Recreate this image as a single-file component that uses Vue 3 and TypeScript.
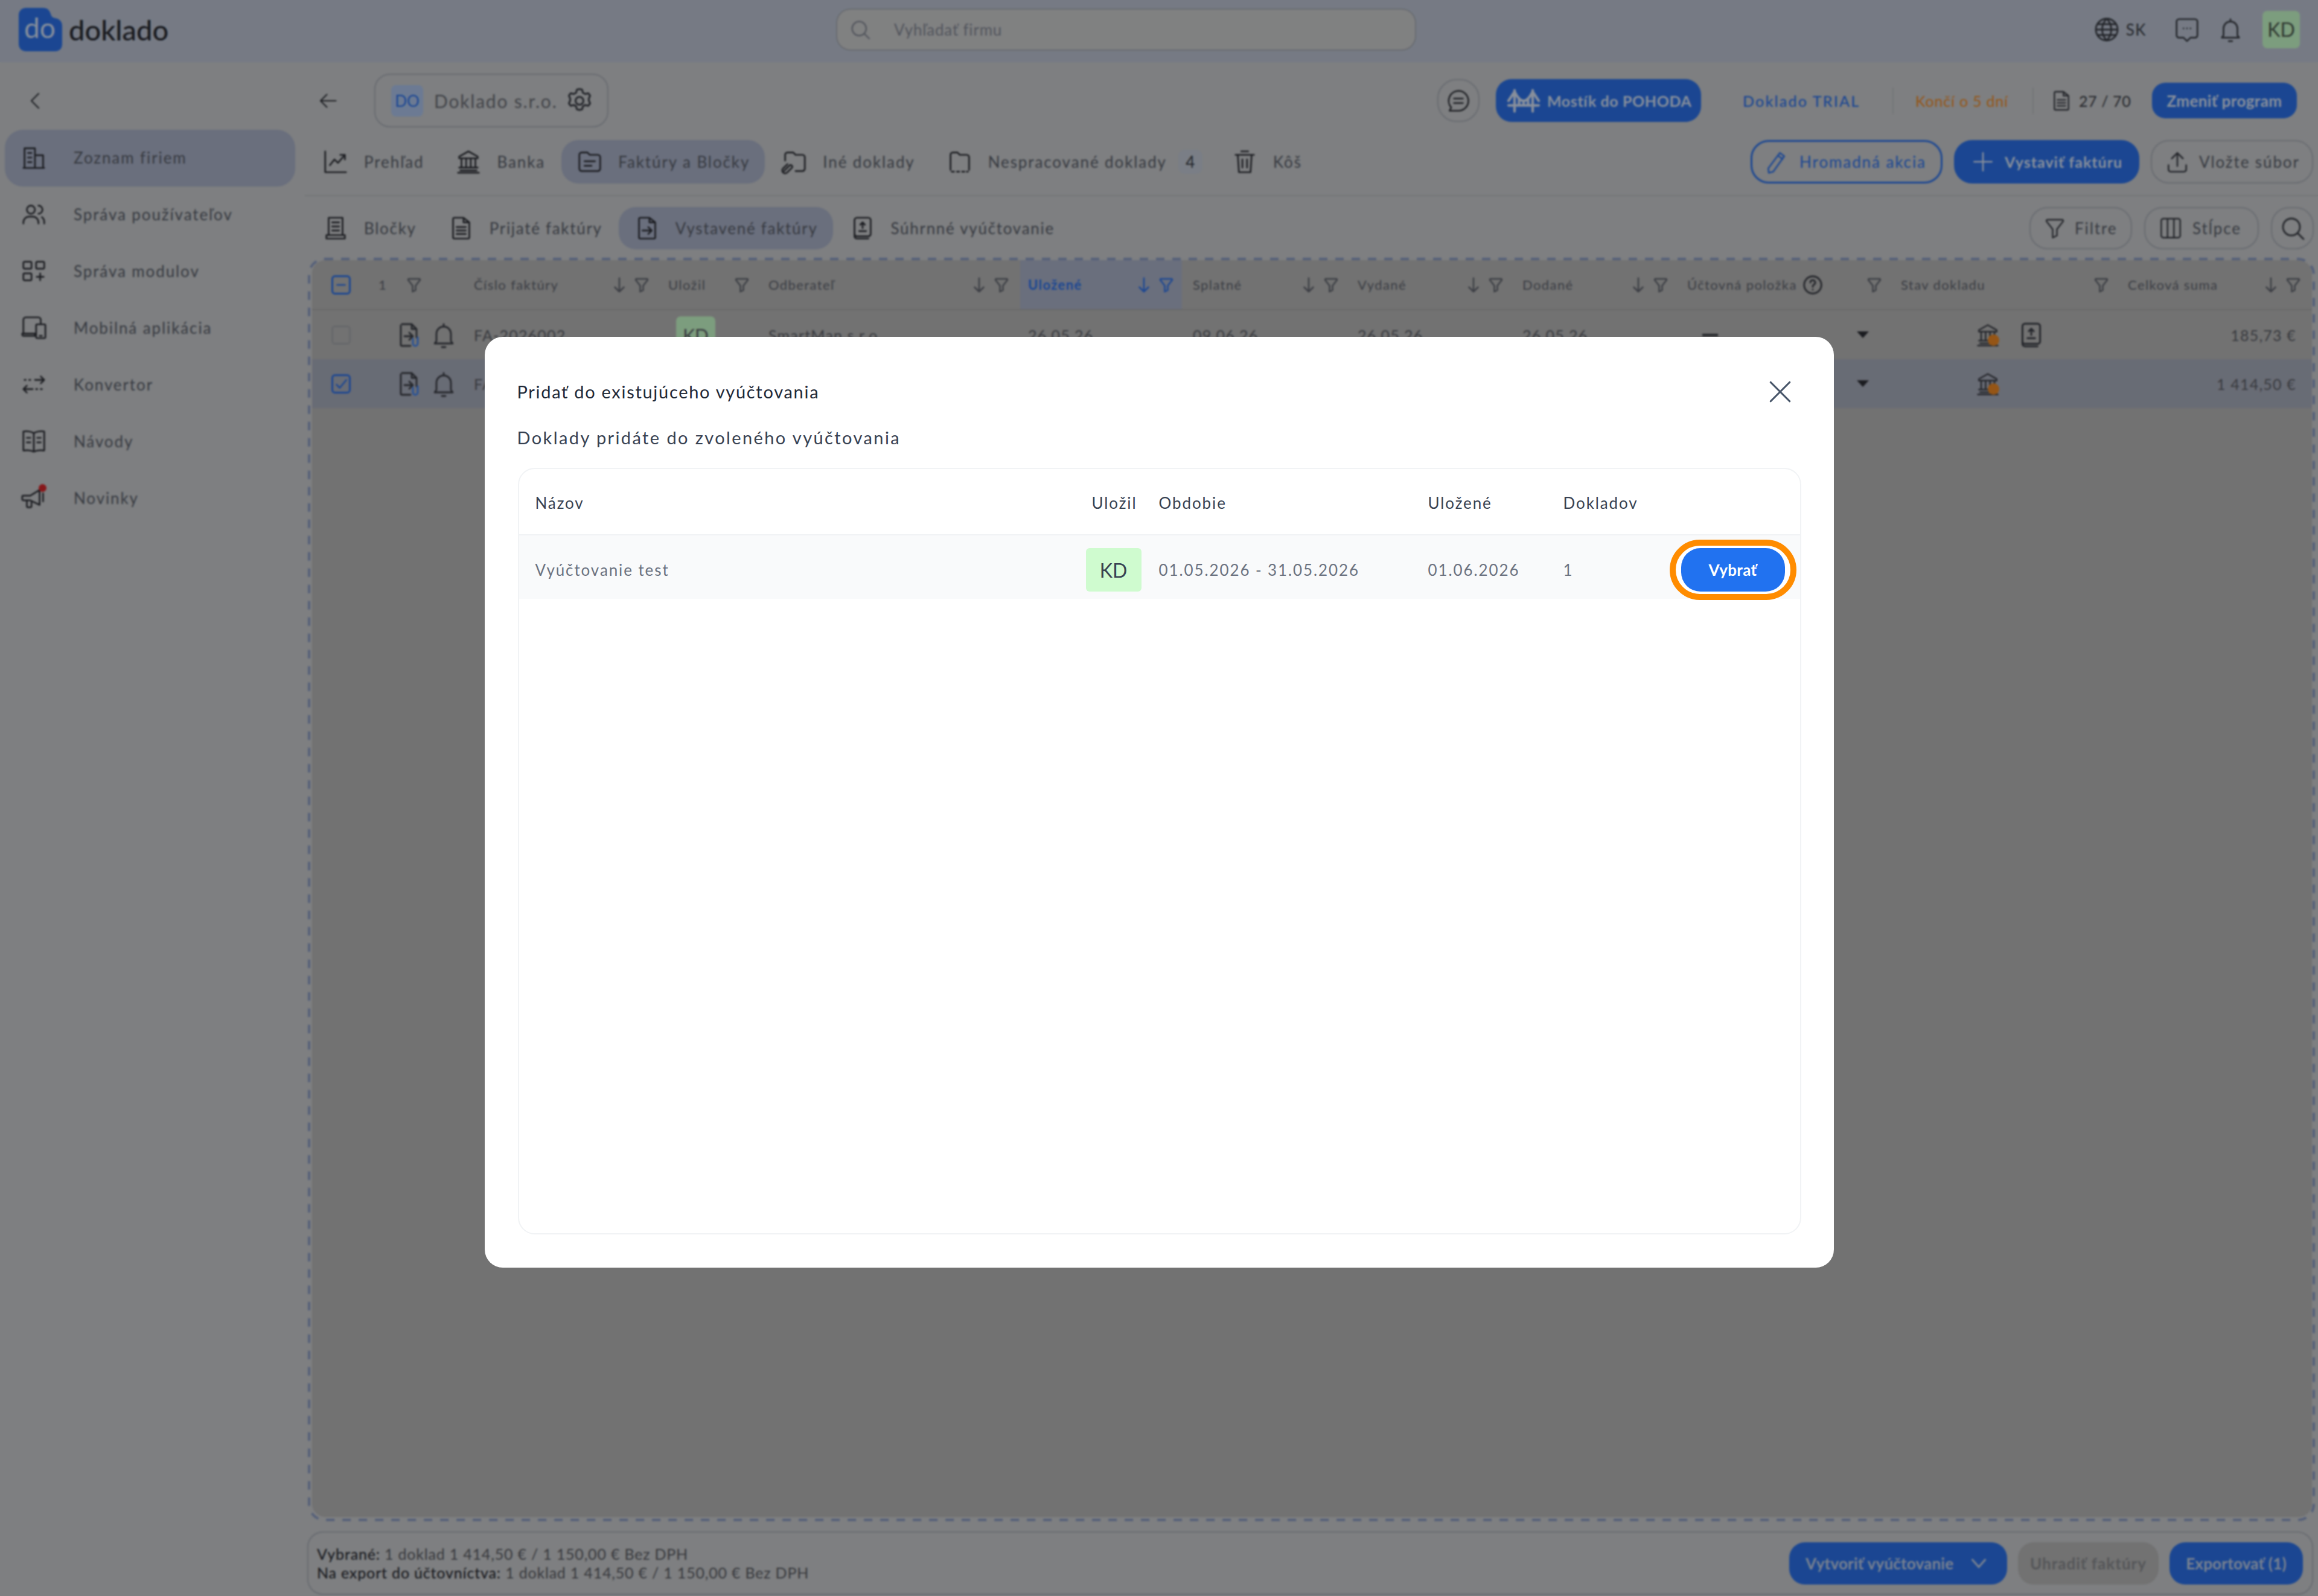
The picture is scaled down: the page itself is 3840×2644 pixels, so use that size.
<script setup lang="ts">
import { h } from "vue";

const icons: Record<string, { d: string; accent?: string }> = {
    back: { d: "M16 4l-8 8 8 8" },
    arrowLeft: { d: "M21 12H4M11 5l-7 7 7 7" },
    building: { d: "M3 21h18M4 21V4h9v17M13 10h7v11M7 8h3M7 12h3M7 16h3" },
    users: { d: "M3 20v-1a5 5 0 0 1 5-5h3a5 5 0 0 1 5 5v1M6 8a3.5 3.5 0 1 0 7 0a3.5 3.5 0 1 0-7 0M16 4.5a3.5 3.5 0 0 1 0 7M19 14.5a5 5 0 0 1 2 4v1.5" },
    modules: { d: "M4 4h5a1 1 0 0 1 1 1v4a1 1 0 0 1-1 1H4a1 1 0 0 1-1-1V5a1 1 0 0 1 1-1zM15 4h5a1 1 0 0 1 1 1v4a1 1 0 0 1-1 1h-5a1 1 0 0 1-1-1V5a1 1 0 0 1 1-1zM4 14h5a1 1 0 0 1 1 1v4a1 1 0 0 1-1 1H4a1 1 0 0 1-1-1v-4a1 1 0 0 1 1-1zM17.5 14v6M14.5 17h6" },
    device: { d: "M3 16V5a2 2 0 0 1 2-2h11a2 2 0 0 1 2 2v4M2 17h11v2H3a1 1 0 0 1-1-1zM15 9h6a1 1 0 0 1 1 1v10a1 1 0 0 1-1 1h-6a1 1 0 0 1-1-1V10a1 1 0 0 1 1-1zM17 19h2" },
    convert: { d: "M13 8h8M18 5l3 3-3 3M3 16h8M6 13l-3 3 3 3M4 8h1M8 8h1M14 16h1M18 16h1" },
    book: { d: "M12 5v16M12 5c-2-1.5-6-2-9-1.5V20c3-.5 7 0 9 1 2-1 6-1.5 9-1V3.5c-3-.5-7 0-9 1.5zM6 9h3M6 13h3M15 9h3M15 13h3" },
    megaphone: { d: "M3 10h6l8-5v13l-8-4H3a1 1 0 0 1-1-1v-2a1 1 0 0 1 1-1zM6 14v5a1 1 0 0 0 1 1h2a1 1 0 0 0 1-1v-4M20 8v7" },
    gear: { d: "M12 3l2 .5.6 2.3 1.8 1 2.3-.6 1.4 1.8-1 2.3v1.4l1 2.3-1.4 1.8-2.3-.6-1.8 1-.6 2.3-2 .5-2-.5-.6-2.3-1.8-1-2.3.6-1.4-1.8 1-2.3v-1.4l-1-2.3 1.4-1.8 2.3.6 1.8-1L10 3.5zM9 12a3 3 0 1 0 6 0a3 3 0 1 0-6 0" },
    bubble: { d: "M12 3a9 9 0 0 1 0 18H4l1.5-3A9 9 0 0 1 12 3zM8 10h8M8 14h8" },
    chart: { d: "M3 3v18h18M7 15l4-5 3 3 6-7M16 6h4v4" },
    bank: { d: "M12 3l8 4.5V9H4V7.5zM6 9v8M10 9v8M14 9v8M18 9v8M4 17h16M5 19.5h14M3 21.5h18" },
    folderDoc: { d: "M3 6a2 2 0 0 1 2-2h5l2 2h7a2 2 0 0 1 2 2v10a2 2 0 0 1-2 2H5a2 2 0 0 1-2-2zM7.5 11.5h9M7.5 15.5h6" },
    folderClip: { d: "M4 11V6a2 2 0 0 1 2-2h5l2 2h6a2 2 0 0 1 2 2v10a2 2 0 0 1-2 2h-6M3 20l5-5a1.5 1.5 0 0 1 2 2l-4 4a2.5 2.5 0 0 1-4-3l4-4" },
    folderDash: { d: "M4 19V6a2 2 0 0 1 2-2h4l2 2h6a2 2 0 0 1 2 2v11M5 20.5h2M9.5 20.5h2M14 20.5h2M18 20.5h1" },
    trash: { d: "M4 6h16M9 3h6M6 6l1 15h10l1-15M10 10v7M14 10v7" },
    receipt: { d: "M6 3h12v15H6zM4 18h16v3H4zM9 7h6M9 10.5h6M9 14h6" },
    invoice: { d: "M6 3h8l5 4v13a1 1 0 0 1-1 1H6a1 1 0 0 1-1-1V4a1 1 0 0 1 1-1zM14 3v4h5M8 11h8M8 14h8M8 17h8" },
    docArrow: { d: "M6 3h8l5 4v13a1 1 0 0 1-1 1H6a1 1 0 0 1-1-1V4a1 1 0 0 1 1-1zM14 3v4h5M8 14h8M13 11l3 3-3 3" },
    docClip: { d: "M6 3h8l4 4v7M14 3v4h4M5 4v16a1 1 0 0 0 1 1h7M8 13h7M12 10l3 3-3 3", accent: "M19 14v5a2 2 0 0 1-4 0v-4" },
    stack: { d: "M7 3h10a2 2 0 0 1 2 2v12a2 2 0 0 1-2 2H7a2 2 0 0 1-2-2V5a2 2 0 0 1 2-2zM5 17v2a2 2 0 0 0 2 2h10M12 7v5M10 9l2-2 2 2M9 14.5h6" },
    pencil: { d: "M15 4l4 3L9 21l-4 1-.5-4zM13.5 6.5l4 3" },
    plus: { d: "M12 4v16M4 12h16" },
    upload: { d: "M12 16V4M7 9l5-5 5 5M4 15v4a2 2 0 0 0 2 2h12a2 2 0 0 0 2-2v-4" },
    filter: { d: "M5 4h14a1 1 0 0 1 .8 1.6L14 13v6l-4 2v-8L4.2 5.6A1 1 0 0 1 5 4z" },
    columns: { d: "M5 3h14a2 2 0 0 1 2 2v14a2 2 0 0 1-2 2H5a2 2 0 0 1-2-2V5a2 2 0 0 1 2-2zM9 3v18M15 3v18" },
    search: { d: "M4 11a7 7 0 1 0 14 0a7 7 0 1 0-14 0M16 16l5 5" },
    globe: { d: "M3 12a9 9 0 1 0 18 0a9 9 0 1 0-18 0M3 12h18M4.5 7.5h15M4.5 16.5h15M12 3c-5 5-5 13 0 18M12 3c5 5 5 13 0 18" },
    chatDots: { d: "M5 3h14a2 2 0 0 1 2 2v12a2 2 0 0 1-2 2h-4l-3 3-3-3H5a2 2 0 0 1-2-2V5a2 2 0 0 1 2-2zM9 11h.01M12 11h.01M15 11h.01" },
    bell: { d: "M6 17V11a6 6 0 0 1 12 0v6l1.5 2h-15zM12 3v2M10.5 22h3" },
    arrowDown: { d: "M12 3v18M6 15l6 6 6-6" },
    help: { d: "M3 12a9 9 0 1 0 18 0a9 9 0 1 0-18 0M9.5 9.5a2.5 2.5 0 1 1 3.5 2.3c-.7.4-1 1-1 2.2M12 17h.01" },
    close: { d: "M5 5l14 14M19 5L5 19" },
    chevronDown: { d: "M5 8l7 8 7-8" },
    minus: { d: "M6 12h12" },
    check: { d: "M5 13l5 5 10-12" },
    bridge: { d: "M2 15h20M6 5v14M18 5v14M6 6c2 4 4 6 6 6s4-2 6-6M2 12l4-6M22 12l-4-6M9 11v4M12 12v3M15 11v4" },
};

// jednoduchá ikonka podľa názvu
const Icon = (p: { name: string }) => {
    const def = icons[p.name];
    return h(
        "svg",
        { viewBox: "0 0 24 24", fill: "none", stroke: "currentColor", "stroke-width": 1.4, "stroke-linecap": "round", "stroke-linejoin": "round", class: "ic" },
        [h("path", { d: def.d }), def.accent ? h("path", { d: def.accent, stroke: "#3b82f6" }) : null],
    );
};

const sideItems = [
    { label: "Zoznam firiem", icon: "building", active: true },
    { label: "Správa používateľov", icon: "users" },
    { label: "Správa modulov", icon: "modules" },
    { label: "Mobilná aplikácia", icon: "device" },
    { label: "Konvertor", icon: "convert" },
    { label: "Návody", icon: "book" },
    { label: "Novinky", icon: "megaphone", dot: true },
];

const navTabs = [
    { label: "Prehľad", icon: "chart" },
    { label: "Banka", icon: "bank" },
    { label: "Faktúry a Bločky", icon: "folderDoc", active: true },
    { label: "Iné doklady", icon: "folderClip" },
    { label: "Nespracované doklady", icon: "folderDash", badge: "4" },
    { label: "Kôš", icon: "trash" },
];

const subTabs = [
    { label: "Bločky", icon: "receipt" },
    { label: "Prijaté faktúry", icon: "invoice" },
    { label: "Vystavené faktúry", icon: "docArrow", active: true },
    { label: "Súhrnné vyúčtovanie", icon: "stack" },
];

const columns = [
    { label: "Číslo faktúry", sort: true, filter: true },
    { label: "Uložil", filter: true },
    { label: "Odberateľ", sort: true, filter: true },
    { label: "Uložené", sort: true, filter: true, active: true },
    { label: "Splatné", sort: true, filter: true },
    { label: "Vydané", sort: true, filter: true },
    { label: "Dodané", sort: true, filter: true },
    { label: "Účtovná položka", help: true, filter: true },
    { label: "Stav dokladu", filter: true },
    { label: "Celková suma", sort: true, filter: true },
];

const rows = [
    { no: "FA-2026002", buyer: "SmartMan s.r.o.", saved: "26.05.26", due: "09.06.26", issued: "26.05.26", delivered: "26.05.26", sum: "185,73 €", selected: false, stack: true, dash: true },
    { no: "FA-2026001", buyer: "SmartMan s.r.o.", saved: "26.05.26", due: "09.06.26", issued: "26.05.26", delivered: "26.05.26", sum: "1 414,50 €", selected: true, stack: false, dash: false },
];
</script>

<template>
    <div class="app">
        <header class="topbar">
            <div class="brand">
                <svg class="logo" viewBox="0 0 72 72">
                    <path d="M12 0h28c8 0 11 4 13 10 1 4 3 6 7 7 7 1 12 5 12 13v30c0 8-5 12-12 12H12C5 72 0 67 0 60V12C0 5 5 0 12 0z" fill="#2c72ec" />
                    <text x="35" y="50" text-anchor="middle" class="logo-text">do</text>
                </svg>
                <span class="brand-name">doklado</span>
            </div>
            <div class="search">
                <Icon name="search" />
                <span>Vyhľadať firmu</span>
            </div>
            <div class="top-right">
                <Icon name="globe" class="globe-ic" />
                <span class="lang">SK</span>
                <Icon name="chatDots" class="chat-ic" />
                <Icon name="bell" class="bell-ic" />
                <span class="user-badge">KD</span>
            </div>
        </header>

        <div class="body">
            <aside class="sidebar">
                <div class="collapse"><Icon name="back" /></div>
                <div v-for="item in sideItems" :key="item.label" class="side-item" :class="{ active: item.active }">
                    <span class="side-icon">
                        <Icon :name="item.icon" />
                        <i v-if="item.dot" class="red-dot"></i>
                    </span>
                    <span>{{ item.label }}</span>
                </div>
            </aside>

            <main class="main">
                <div class="toolbar">
                    <Icon name="arrowLeft" class="back-ic" />
                    <div class="company">
                        <span class="company-badge">DO</span>
                        <span class="company-name">Doklado s.r.o.</span>
                        <Icon name="gear" />
                    </div>
                    <div class="toolbar-right">
                        <button class="round-btn"><Icon name="bubble" /></button>
                        <button class="bridge-btn"><Icon name="bridge" />Mostík do POHODA</button>
                        <div class="plan">
                            <span class="plan-name">Doklado TRIAL</span>
                            <i class="sep"></i>
                            <span class="plan-end">Končí o 5 dní</span>
                            <i class="sep"></i>
                            <Icon name="invoice" class="plan-ic" />
                            <span class="plan-count">27 / 70</span>
                        </div>
                        <button class="change-btn">Zmeniť program</button>
                    </div>
                </div>

                <div class="nav-row">
                    <div class="tabs">
                        <div v-for="tab in navTabs" :key="tab.label" class="tab" :class="{ active: tab.active }">
                            <Icon :name="tab.icon" />
                            <span>{{ tab.label }}</span>
                            <em v-if="tab.badge" class="count">{{ tab.badge }}</em>
                        </div>
                    </div>
                    <div class="actions">
                        <button class="btn outline-blue"><Icon name="pencil" />Hromadná akcia</button>
                        <button class="btn solid"><Icon name="plus" />Vystaviť faktúru</button>
                        <button class="btn outline upload-btn"><Icon name="upload" />Vložte súbor</button>
                    </div>
                </div>

                <div class="sub-row">
                    <div class="tabs">
                        <div v-for="tab in subTabs" :key="tab.label" class="tab sub" :class="{ active: tab.active }">
                            <Icon :name="tab.icon" />
                            <span>{{ tab.label }}</span>
                        </div>
                    </div>
                    <div class="actions tight">
                        <button class="btn outline filter-btn"><Icon name="filter" />Filtre</button>
                        <button class="btn outline columns-btn"><Icon name="columns" />Stĺpce</button>
                        <button class="btn outline icon-only"><Icon name="search" /></button>
                    </div>
                </div>

                <div class="dropzone">
                    <svg class="dash-frame"><rect x="2" y="2" rx="26" ry="26" /></svg>
                    <div class="grid-table">
                        <div class="grid-row head">
                            <div class="cell sel">
                                <span class="box blue"><Icon name="minus" /></span>
                                <span class="sel-count">1</span>
                                <Icon name="filter" class="th-ic" />
                            </div>
                            <div v-for="col in columns" :key="col.label" class="cell th" :class="{ active: col.active }">
                                <span class="th-label">{{ col.label }}</span>
                                <Icon v-if="col.help" name="help" class="help-ic" />
                                <span class="spacer"></span>
                                <Icon v-if="col.sort" name="arrowDown" class="th-ic" />
                                <Icon v-if="col.filter" name="filter" class="th-ic" />
                            </div>
                        </div>
                        <div v-for="row in rows" :key="row.no" class="grid-row body-row" :class="{ selected: row.selected }">
                            <div class="cell sel">
                                <span class="box" :class="{ blue: row.selected }"><Icon v-if="row.selected" name="check" /></span>
                                <Icon name="docClip" class="row-doc" />
                                <Icon name="bell" class="row-bell" />
                            </div>
                            <div class="cell td">{{ row.no }}</div>
                            <div class="cell td"><span class="kd">KD</span></div>
                            <div class="cell td">{{ row.buyer }}</div>
                            <div class="cell td">{{ row.saved }}</div>
                            <div class="cell td">{{ row.due }}</div>
                            <div class="cell td">{{ row.issued }}</div>
                            <div class="cell td">{{ row.delivered }}</div>
                            <div class="cell td account">
                                <span class="dash" :class="{ hidden: !row.dash }"></span>
                                <i class="caret"></i>
                            </div>
                            <div class="cell td state">
                                <span class="bank"><Icon name="bank" /><i class="orange-dot"></i></span>
                                <Icon v-if="row.stack" name="stack" class="state-doc" />
                            </div>
                            <div class="cell td sum">{{ row.sum }}</div>
                        </div>
                    </div>
                </div>

                <footer class="summary">
                    <div class="summary-text">
                        <div><b>Vybrané:</b> 1 doklad 1 414,50 € / 1 150,00 € Bez DPH</div>
                        <div><b>Na export do účtovníctva:</b> 1 doklad 1 414,50 € / 1 150,00 € Bez DPH</div>
                    </div>
                    <div class="summary-actions">
                        <button class="foot-btn wide">Vytvoriť vyúčtovanie <Icon name="chevronDown" /></button>
                        <button class="foot-btn off">Uhradiť faktúry</button>
                        <button class="foot-btn export">Exportovať (1)</button>
                    </div>
                </footer>
            </main>
        </div>

        <div class="overlay">
            <section class="modal">
                <div class="modal-head">
                    <h2>Pridať do existujúceho vyúčtovania</h2>
                    <Icon name="close" class="close-ic" />
                </div>
                <p class="modal-sub">Doklady pridáte do zvoleného vyúčtovania</p>
                <div class="list">
                    <div class="list-row list-head">
                        <span class="first">Názov</span>
                        <span class="saved-by">Uložil</span>
                        <span>Obdobie</span>
                        <span>Uložené</span>
                        <span>Dokladov</span>
                        <span></span>
                    </div>
                    <div class="list-row list-item">
                        <span class="first">Vyúčtovanie test</span>
                        <span class="list-kd">KD</span>
                        <span>01.05.2026 - 31.05.2026</span>
                        <span>01.06.2026</span>
                        <span>1</span>
                        <span class="ring"><button class="pick">Vybrať</button></span>
                    </div>
                </div>
            </section>
        </div>
    </div>
</template>

<style>
html,
body {
    margin: 0;
    background: #cbcdd0;
}
</style>

<style scoped>
.app {
    position: relative;
    width: 3840px;
    height: 2644px;
    overflow: hidden;
    display: flex;
    flex-direction: column;
    background: #cbcdd0;
    color: #595e69;
    font-family: "Lato", "Noto Sans", sans-serif;
    font-size: 26px;
    letter-spacing: 1.9px;
}

button {
    font-family: inherit;
    letter-spacing: inherit;
    cursor: pointer;
}

.ic {
    width: 46px;
    height: 46px;
    flex: none;
}

.topbar {
    flex: none;
    height: 103px;
    display: flex;
    align-items: center;
    padding: 0 30px 6px 31px;
    background: #bec6d6;
    box-sizing: border-box;
}

.brand {
    width: 1354px;
    display: flex;
    align-items: center;
    gap: 11px;
}

.logo {
    width: 72px;
    height: 72px;
}

.logo-text {
    font-size: 46px;
    font-weight: 400;
    letter-spacing: 0;
    fill: #d6e4fb;
}

.brand-name {
    font-size: 47px;
    font-weight: 500;
    letter-spacing: 0;
    color: #2a2c33;
}

.search {
    width: 961px;
    height: 70px;
    box-sizing: border-box;
    display: flex;
    align-items: center;
    gap: 36px;
    padding-left: 18px;
    border: 2px solid #a9adb6;
    border-radius: 24px;
    background: #cfd0d1;
    color: #858a96;
    letter-spacing: 0.8px;
}

.search .ic {
    width: 40px;
    height: 40px;
}

.top-right {
    margin-left: auto;
    display: flex;
    align-items: center;
    color: #3a3d45;
}

.globe-ic {
    width: 48px;
    height: 48px;
}

.lang {
    margin: 0 44px 0 8px;
    letter-spacing: 1.4px;
}

.chat-ic {
    margin-right: 26px;
}

.bell-ic {
    margin-right: 30px;
}

.user-badge {
    width: 62px;
    height: 62px;
    display: grid;
    place-items: center;
    border-radius: 8px;
    background: #c9fdcb;
    color: #4b5a4f;
    font-size: 32px;
    letter-spacing: 0;
}

.body {
    flex: 1;
    min-height: 0;
    display: flex;
}

.sidebar {
    width: 505px;
    flex: none;
    padding-left: 8px;
    box-sizing: border-box;
}

.collapse {
    height: 112px;
    display: flex;
    align-items: center;
    padding-left: 32px;
    padding-top: 16px;
    box-sizing: border-box;
    color: #2c2e35;
}

.collapse .ic {
    width: 36px;
    height: 36px;
}

.side-item {
    width: 481px;
    height: 94px;
    display: flex;
    align-items: center;
    gap: 43px;
    padding: 0 0 3px 25px;
    box-sizing: border-box;
    border-radius: 30px;
}

.side-item.active {
    background: #abb3ca;
}

.side-icon {
    position: relative;
    display: flex;
    color: #2c2e35;
}

.red-dot {
    position: absolute;
    top: 0;
    right: 2px;
    width: 13px;
    height: 13px;
    border-radius: 50%;
    background: #d9262b;
}

.main {
    flex: 1;
    min-width: 0;
    display: flex;
    flex-direction: column;
    padding-top: 19px;
}

.toolbar {
    height: 89px;
    display: flex;
    align-items: center;
    padding-right: 35px;
}

.back-ic {
    width: 36px;
    height: 36px;
    margin-left: 20px;
    margin-right: 59px;
    color: #2c2e35;
}

.company {
    width: 388px;
    height: 89px;
    box-sizing: border-box;
    display: flex;
    align-items: center;
    padding: 0 20px 0 26px;
    border: 2px solid #a9adb6;
    border-radius: 26px;
    color: #6b6e76;
}

.company .ic {
    width: 52px;
    height: 52px;
    color: #3a3d45;
}

.company-badge {
    width: 53px;
    height: 52px;
    display: grid;
    place-items: center;
    border-radius: 8px;
    background: #aec6ee;
    color: #2c72ec;
    font-size: 26px;
    letter-spacing: 0;
}

.company-name {
    flex: 1;
    margin-left: 18px;
    font-size: 30px;
    letter-spacing: 1.8px;
    white-space: nowrap;
}

.toolbar-right {
    margin-left: auto;
    display: flex;
    align-items: center;
}

.round-btn {
    width: 70px;
    height: 71px;
    display: grid;
    place-items: center;
    padding: 0;
    border: 2px solid #a9adb6;
    border-radius: 32px;
    background: transparent;
    color: #2c2e35;
}

.round-btn .ic {
    width: 44px;
    height: 44px;
}

.bridge-btn {
    width: 340px;
    height: 71px;
    margin-left: 27px;
    display: flex;
    align-items: center;
    gap: 9px;
    padding: 0 0 0 16px;
    border: none;
    border-radius: 26px;
    background: #2c72ec;
    color: #dbe7fb;
    font-size: 25px;
    font-weight: 700;
    letter-spacing: 0.6px;
    white-space: nowrap;
}

.bridge-btn .ic {
    width: 60px;
    height: 60px;
    stroke-width: 1.7;
}

.plan {
    height: 71px;
    margin-left: 69px;
    display: flex;
    align-items: center;
    font-size: 25px;
}

.plan-name {
    width: 191px;
    color: #2c72ec;
    font-weight: 500;
    white-space: nowrap;
    letter-spacing: 2.2px;
}

.plan-end {
    width: 158px;
    color: #f08a24;
    white-space: nowrap;
    letter-spacing: 0.8px;
}

.sep {
    width: 2px;
    height: 44px;
    margin: 0 36px 0 57px;
    background: #bcbec2;
}

.plan-end + .sep {
    margin: 0 26px 0 36px;
}

.plan-ic {
    width: 40px;
    height: 40px;
    margin-right: 9px;
    color: #3a3d45;
}

.plan-count {
    color: #3a3d45;
    width: 84px;
    white-space: nowrap;
    letter-spacing: 0.6px;
}

.change-btn {
    width: 240px;
    height: 59px;
    margin-left: 37px;
    border: none;
    border-radius: 22px;
    background: #2c72ec;
    color: #dbe7fb;
    font-size: 26px;
    font-weight: 700;
    letter-spacing: 0.4px;
    white-space: nowrap;
    padding: 0;
}

.nav-row {
    height: 72px;
    margin-top: 21px;
    padding-bottom: 19px;
    border-bottom: 2px solid #bcbec2;
    display: flex;
    justify-content: space-between;
}

.sub-row {
    height: 70px;
    margin-top: 18px;
    display: flex;
    justify-content: space-between;
}

.tabs {
    display: flex;
    align-items: stretch;
    gap: 2px;
    margin-left: 4px;
}

.tab {
    display: flex;
    align-items: center;
    gap: 24px;
    padding: 0 25px 0 24px;
    border-radius: 28px;
    white-space: nowrap;
    color: #595e69;
}

.tab.sub {
    letter-spacing: 1.7px;
}

.tab .ic {
    color: #2c2e35;
}

.tab.active {
    background: #abb3ca;
}

.count {
    width: 40px;
    height: 40px;
    margin: 0 -4px 0 -5px;
    display: grid;
    place-items: center;
    border-radius: 10px;
    background: #c5ccd8;
    color: #3a3d45;
    font-style: normal;
    letter-spacing: 0;
}

.actions {
    display: flex;
    gap: 19px;
    padding-right: 8px;
}

.btn {
    height: 100%;
    display: flex;
    align-items: center;
    padding: 0;
    border-radius: 30px;
    font-size: 26px;
    white-space: nowrap;
    box-sizing: border-box;
}

.btn .ic {
    width: 44px;
    height: 44px;
}

.outline-blue {
    width: 318px;
    gap: 16px;
    padding-left: 18px;
    border: 3px solid #2c72ec;
    background: transparent;
    color: #2c72ec;
}

.solid {
    width: 307px;
    gap: 14px;
    padding-left: 26px;
    border: none;
    background: #2c72ec;
    color: #dbe7fb;
    font-size: 25px;
    font-weight: 700;
    letter-spacing: 1px;
}

.outline {
    border: 2px solid #a9adb6;
    background: transparent;
    color: #595e69;
}

.outline .ic {
    color: #3a3d45;
}

.upload-btn {
    width: 269px;
    gap: 14px;
    padding-left: 20px;
}

.filter-btn {
    width: 170px;
    gap: 12px;
    padding-left: 19px;
}

.columns-btn {
    width: 190px;
    gap: 15px;
    padding-left: 21px;
}

.filter-btn .ic,
.columns-btn .ic {
    width: 42px;
    height: 42px;
}

.btn.icon-only {
    width: 71px;
    justify-content: center;
}

.btn.icon-only .ic {
    width: 48px;
    height: 48px;
}

.actions.tight {
    gap: 20px;
    padding-right: 7px;
}

.dropzone {
    position: relative;
    flex: 1;
    min-height: 0;
    margin: 14px 5px 0 5px;
    padding: 4px 5px 7px 7px;
}

.dash-frame {
    position: absolute;
    inset: 0;
    width: 100%;
    height: 100%;
    pointer-events: none;
}

.dash-frame rect {
    width: calc(100% - 4px);
    height: calc(100% - 4px);
    fill: none;
    stroke: #8a9bc4;
    stroke-width: 4;
    stroke-dasharray: 14 13;
}

.grid-table {
    height: 100%;
    background: #b8b8b8;
    border-radius: 22px;
    overflow: hidden;
}

.grid-row {
    display: grid;
    grid-template-columns: 255px 322px 166px 430px 273px 273px 273px 273px 354px 376px 318px;
    align-items: stretch;
}

.head {
    height: 83px;
    border-bottom: 2px solid #a8a8a8;
    box-sizing: border-box;
    font-size: 22px;
    letter-spacing: 1.4px;
    color: #60646e;
}

.body-row {
    height: 81px;
    font-size: 25px;
    letter-spacing: 1.2px;
    color: #5b5e66;
}

.body-row.selected {
    background: #a9aebd;
}

.cell {
    display: flex;
    align-items: center;
    min-width: 0;
    white-space: nowrap;
}

.sel {
    padding-left: 32px;
}

.sel-count {
    margin-left: 46px;
    margin-right: 30px;
}

.box {
    width: 32px;
    height: 32px;
    box-sizing: border-box;
    display: grid;
    place-items: center;
    border: 3px solid #a6a8ad;
    border-radius: 6px;
    flex: none;
    color: #2c72ec;
}

.box.blue {
    border-color: #2c72ec;
}

.box .ic {
    width: 26px;
    height: 26px;
    stroke-width: 2.4;
}

.th {
    padding: 0 16px 0 13px;
    gap: 7px;
}

.th.active {
    margin-right: 5px;
    padding-right: 11px;
    background: #abb3ca;
    color: #2c72ec;
    font-weight: 700;
}

.th-ic {
    width: 30px;
    height: 30px;
    stroke-width: 2;
    color: #60646e;
}

.th.active .th-ic {
    color: #2c72ec;
}

.help-ic {
    width: 38px;
    height: 38px;
    stroke-width: 1.8;
    color: #3a3d45;
}

.spacer {
    flex: 1;
}

.row-doc {
    width: 48px;
    height: 48px;
    margin-left: 73px;
    color: #3a3d45;
}

.row-bell {
    width: 48px;
    height: 48px;
    margin-left: 9px;
    color: #3a3d45;
}

.td {
    padding-left: 13px;
}

.kd {
    width: 65px;
    height: 62px;
    margin-left: 13px;
    display: grid;
    place-items: center;
    border-radius: 8px;
    background: #c9fdcb;
    font-size: 30px;
    letter-spacing: 0;
}

.account {
    justify-content: space-between;
    padding: 0 40px 0 38px;
}

.dash {
    width: 26px;
    height: 4px;
    background: #3a3d45;
}

.dash.hidden {
    visibility: hidden;
}

.caret {
    border-left: 10px solid transparent;
    border-right: 10px solid transparent;
    border-top: 11px solid #2c2e35;
}

.state {
    padding-left: 135px;
    gap: 25px;
    color: #3a3d45;
}

.bank {
    position: relative;
    display: flex;
}

.bank .ic {
    width: 44px;
    height: 44px;
}

.state-doc {
    width: 50px;
    height: 50px;
}

.orange-dot {
    position: absolute;
    right: 3px;
    bottom: 4px;
    width: 19px;
    height: 19px;
    border-radius: 50%;
    background: #f08a24;
}

.sum {
    justify-content: flex-end;
    padding-right: 26px;
}

.summary {
    flex: none;
    height: 105px;
    box-sizing: border-box;
    margin: 17px 8px 2px 4px;
    display: flex;
    align-items: center;
    justify-content: space-between;
    padding: 0 15px 0 14px;
    border: 2px solid #a9adb6;
    border-radius: 26px;
}

.summary-text {
    font-size: 25px;
    line-height: 31px;
    letter-spacing: 0.8px;
    color: #5a5c63;
}

.summary-text b {
    font-weight: 500;
    color: #2c2e35;
}

.summary-actions {
    display: flex;
    gap: 18px;
}

.foot-btn {
    height: 70px;
    display: flex;
    align-items: center;
    gap: 24px;
    padding: 0;
    border: none;
    border-radius: 26px;
    background: #2c72ec;
    color: #c0d0ea;
    font-size: 26px;
    font-weight: 700;
    letter-spacing: 0.2px;
    white-space: nowrap;
}

.foot-btn .ic {
    width: 36px;
    height: 36px;
    stroke-width: 2.2;
}

.foot-btn.wide {
    width: 361px;
    padding-left: 27px;
}

.foot-btn.off {
    width: 233px;
    justify-content: center;
    background: #b8b8b8;
    color: #8a8c90;
    letter-spacing: 1px;
}

.foot-btn.export {
    width: 221px;
    justify-content: center;
}

.overlay {
    position: absolute;
    inset: 0;
    display: flex;
    align-items: center;
    justify-content: center;
    padding-top: 14px;
    box-sizing: border-box;
    background: rgba(0, 0, 0, 0.38);
    backdrop-filter: blur(1.5px);
}

.modal {
    width: 2235px;
    height: 1542px;
    box-sizing: border-box;
    display: flex;
    flex-direction: column;
    padding: 72px 54px 55px;
    border-radius: 30px;
    background: #fff;
    color: #374151;
}

.modal-head {
    height: 38px;
    display: flex;
    align-items: center;
    justify-content: space-between;
}

.modal-head h2 {
    margin: 0;
    font-size: 29px;
    font-weight: 400;
    line-height: 38px;
    letter-spacing: 1.7px;
    color: #1f2937;
}

.close-ic {
    width: 54px;
    height: 54px;
    margin-right: 8px;
    color: #475569;
}

.modal-sub {
    margin: 38px 0 0;
    font-size: 29px;
    line-height: 38px;
    letter-spacing: 2.4px;
}

.list {
    flex: 1;
    margin-top: 31px;
    margin-left: 1px;
    border: 2px solid #f1f3f5;
    border-radius: 28px;
}

.list-row {
    display: grid;
    grid-template-columns: 939px 109px 446px 224px 190px 1fr;
    align-items: center;
}

.list-row > span:nth-child(n + 3):nth-child(-n + 5) {
    padding-left: 12px;
}

.first {
    padding-left: 27px;
}

.list-head {
    height: 110px;
    padding-top: 3px;
    border-bottom: 2px solid #f1f3f5;
    box-sizing: border-box;
    color: #374151;
}

.saved-by {
    padding-left: 10px;
}

.list-item {
    height: 105px;
    padding-top: 7px;
    box-sizing: border-box;
    background: #f9fafb;
    color: #6b7280;
}

.list-kd {
    width: 92px;
    height: 72px;
    display: grid;
    place-items: center;
    border-radius: 6px;
    background: #cffbcf;
    color: #374151;
    font-size: 32px;
    letter-spacing: 0;
}

.ring {
    justify-self: start;
    display: inline-flex;
    margin-left: -2px;
    padding: 4px 9px;
    border: 10px solid #ff8c00;
    border-radius: 50px;
    background: #fff;
}

.pick {
    width: 172px;
    height: 72px;
    border: none;
    border-radius: 32px;
    background: #2172f0;
    color: #fff;
    font-size: 26px;
    font-weight: 700;
    letter-spacing: 0.3px;
}
</style>
